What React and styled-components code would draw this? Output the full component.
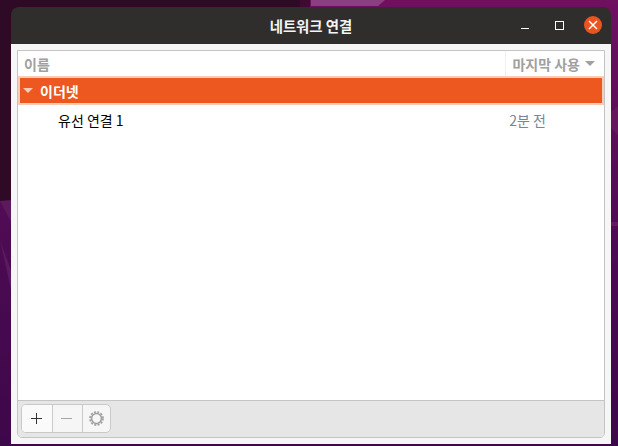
import styled, { createGlobalStyle } from "styled-components";

const Global = createGlobalStyle`
  html, body {
    margin: 0;
    padding: 0;
    width: 618px;
    height: 446px;
    overflow: hidden;
  }
  body {
    font-family: "Noto Sans CJK KR", "Noto Sans", sans-serif;
  }
`;

export default function App() {
  return (
    <>
      <Global />
      <Desktop>
        <Wallpaper viewBox="0 0 618 446">
          <defs>
            <linearGradient id="wall" x1="0" y1="0" x2="0" y2="1">
              <stop offset="0" stopColor="#6f1060" />
              <stop offset="0.3" stopColor="#5a0e58" />
              <stop offset="0.6" stopColor="#4a0a52" />
              <stop offset="1" stopColor="#3d0849" />
            </linearGradient>
          </defs>
          <path d="M0 0H618V446H0Z" fill="url(#wall)" />
          <path d="M0 0H300V201H0Z" fill="#2e0a26" />
          <path d="M300 0H310V201H300Z" fill="#3e0a32" />
          <path d="M311 0H385L378 6H311Z" fill="#8a3f80" />
          <path d="M0 201L11 222V200Z" fill="#5a1a5c" />
          <path d="M0 240L11 290V270Z" fill="#5a1a5c" />
          <path d="M611 112L618 106V135L611 128Z" fill="#65185e" />
          <path d="M611 222H618V226H611Z" fill="#65185e" />
        </Wallpaper>
        <Window>
          <TitleBar>
            <Title>네트워크 연결</Title>
            <MinButton />
            <MaxButton />
            <CloseButton>
              <svg width="12" height="12" viewBox="0 0 12 12">
                <path d="M2 2L10 10M10 2L2 10" stroke="#fff" strokeWidth="1.5" />
              </svg>
            </CloseButton>
          </TitleBar>
          <Body>
            <Frame>
              <List>
                <HeaderRow>
                  <NameHeader>이름</NameHeader>
                  <LastUsedHeader>
                    마지막 사용
                    <Arrow $color="#a0a0a0" />
                  </LastUsedHeader>
                </HeaderRow>
                <GroupRow>
                  <Arrow $color="#f9c9b4" />
                  <GroupName>이더넷</GroupName>
                </GroupRow>
                <ItemRow>
                  <ItemName>유선 연결 1</ItemName>
                  <ItemTime>2분 전</ItemTime>
                </ItemRow>
              </List>
              <Toolbar>
                <ButtonGroup>
                  <ToolButton $first>
                    <svg width="11" height="11" viewBox="0 0 11 11">
                      <path d="M5.5 0V11M0 5.5H11" stroke="#333" strokeWidth="1" />
                    </svg>
                  </ToolButton>
                  <ToolButton>
                    <svg width="11" height="11" viewBox="0 0 11 11">
                      <path d="M0 5.5H11" stroke="#a5a5a5" strokeWidth="1" />
                    </svg>
                  </ToolButton>
                  <ToolButton>
                    <svg width="17" height="17" viewBox="0 0 18 18">
                      <circle cx="9" cy="9" r="5.2" fill="none" stroke="#a0a0a0" strokeWidth="1.6" />
                      <circle cx="9" cy="9" r="6.9" fill="none" stroke="#a0a0a0" strokeWidth="1.8" strokeDasharray="2.2 1.41" />
                    </svg>
                  </ToolButton>
                </ButtonGroup>
              </Toolbar>
            </Frame>
          </Body>
        </Window>
      </Desktop>
    </>
  );
}

const Desktop = styled.div`
  position: relative;
  width: 618px;
  height: 446px;
  padding: 7px 7px 2px 11px;
  box-sizing: border-box;
  overflow: hidden;
`;

const Wallpaper = styled.svg`
  position: absolute;
  left: 0;
  top: 0;
  width: 618px;
  height: 446px;
`;

const Window = styled.div`
  position: relative;
  width: 600px;
  height: 437px;
  display: flex;
  flex-direction: column;
  border-radius: 8px 8px 0 0;
  overflow: hidden;
`;

const TitleBar = styled.div`
  position: relative;
  height: 37px;
  flex: none;
  display: flex;
  align-items: center;
  justify-content: center;
  background: #302e2d;
`;

const Title = styled.div`
  color: #f5f5f5;
  font-size: 14.4px;
  font-weight: 700;
`;

const MinButton = styled.div`
  position: absolute;
  left: 510px;
  top: 21px;
  width: 8px;
  height: 1px;
  background: #fff;
`;

const MaxButton = styled.div`
  position: absolute;
  left: 544px;
  top: 14px;
  width: 7px;
  height: 7px;
  border: 1px solid #fff;
`;

const CloseButton = styled.div`
  position: absolute;
  left: 573px;
  top: 9px;
  width: 18px;
  height: 18px;
  border-radius: 50%;
  background: #e95420;
  display: flex;
  align-items: center;
  justify-content: center;
`;

const Body = styled.div`
  flex: 1;
  display: flex;
  padding: 6px;
  background: #f6f6f6;
`;

const Frame = styled.div`
  flex: 1;
  display: flex;
  flex-direction: column;
  border: 1px solid #c4c4c4;
  border-radius: 0 0 5px 5px;
  overflow: hidden;
`;

const List = styled.div`
  flex: 1;
  background: #fff;
`;

const HeaderRow = styled.div`
  height: 25px;
  display: flex;
  align-items: stretch;
  color: #a0a0a0;
  font-size: 14px;
  font-weight: 700;
`;

const NameHeader = styled.span`
  flex: 1;
  display: flex;
  align-items: center;
  padding-left: 6px;
`;

const LastUsedHeader = styled.span`
  display: flex;
  align-items: center;
  gap: 5px;
  padding: 0 9px 0 6px;
  border-left: 1px solid #f0f0f0;
`;

const Arrow = styled.i`
  width: 0;
  height: 0;
  border-left: 5px solid transparent;
  border-right: 5px solid transparent;
  border-top: 5px solid ${(p) => p.$color};
`;

const GroupRow = styled.div`
  height: 25px;
  display: flex;
  align-items: center;
  gap: 7px;
  padding-left: 3px;
  background: #ed5720;
  border: 2px solid #fbcdb9;
`;

const GroupName = styled.span`
  color: #fff;
  font-size: 14px;
  font-weight: 700;
`;

const ItemRow = styled.div`
  height: 30px;
  display: flex;
  align-items: center;
  justify-content: space-between;
  padding: 0 58px 0 40px;
  font-size: 14px;
`;

const ItemName = styled.span`
  color: #000;
`;

const ItemTime = styled.span`
  color: #72879b;
`;

const Toolbar = styled.div`
  flex: none;
  height: 37px;
  display: flex;
  align-items: flex-start;
  padding: 3px 3px 0;
  box-sizing: border-box;
  background: #e6e6e6;
  border-top: 1px solid #c4c4c4;
`;

const ButtonGroup = styled.div`
  display: flex;
  height: 29px;
  box-sizing: border-box;
  border: 1px solid #c9c9c9;
  border-radius: 5px;
  background: #f6f6f6;
`;

const ToolButton = styled.div`
  width: 30px;
  box-sizing: border-box;
  padding-right: 2px;
  display: flex;
  align-items: center;
  justify-content: center;
  background: ${(p) => (p.$first ? "#fafafa" : "transparent")};
  border-radius: ${(p) => (p.$first ? "4px 0 0 4px" : "0")};
  & + & {
    border-left: 1px solid #c9c9c9;
  }
  &:last-child {
    width: 28px;
    padding-right: 0;
  }
`;
